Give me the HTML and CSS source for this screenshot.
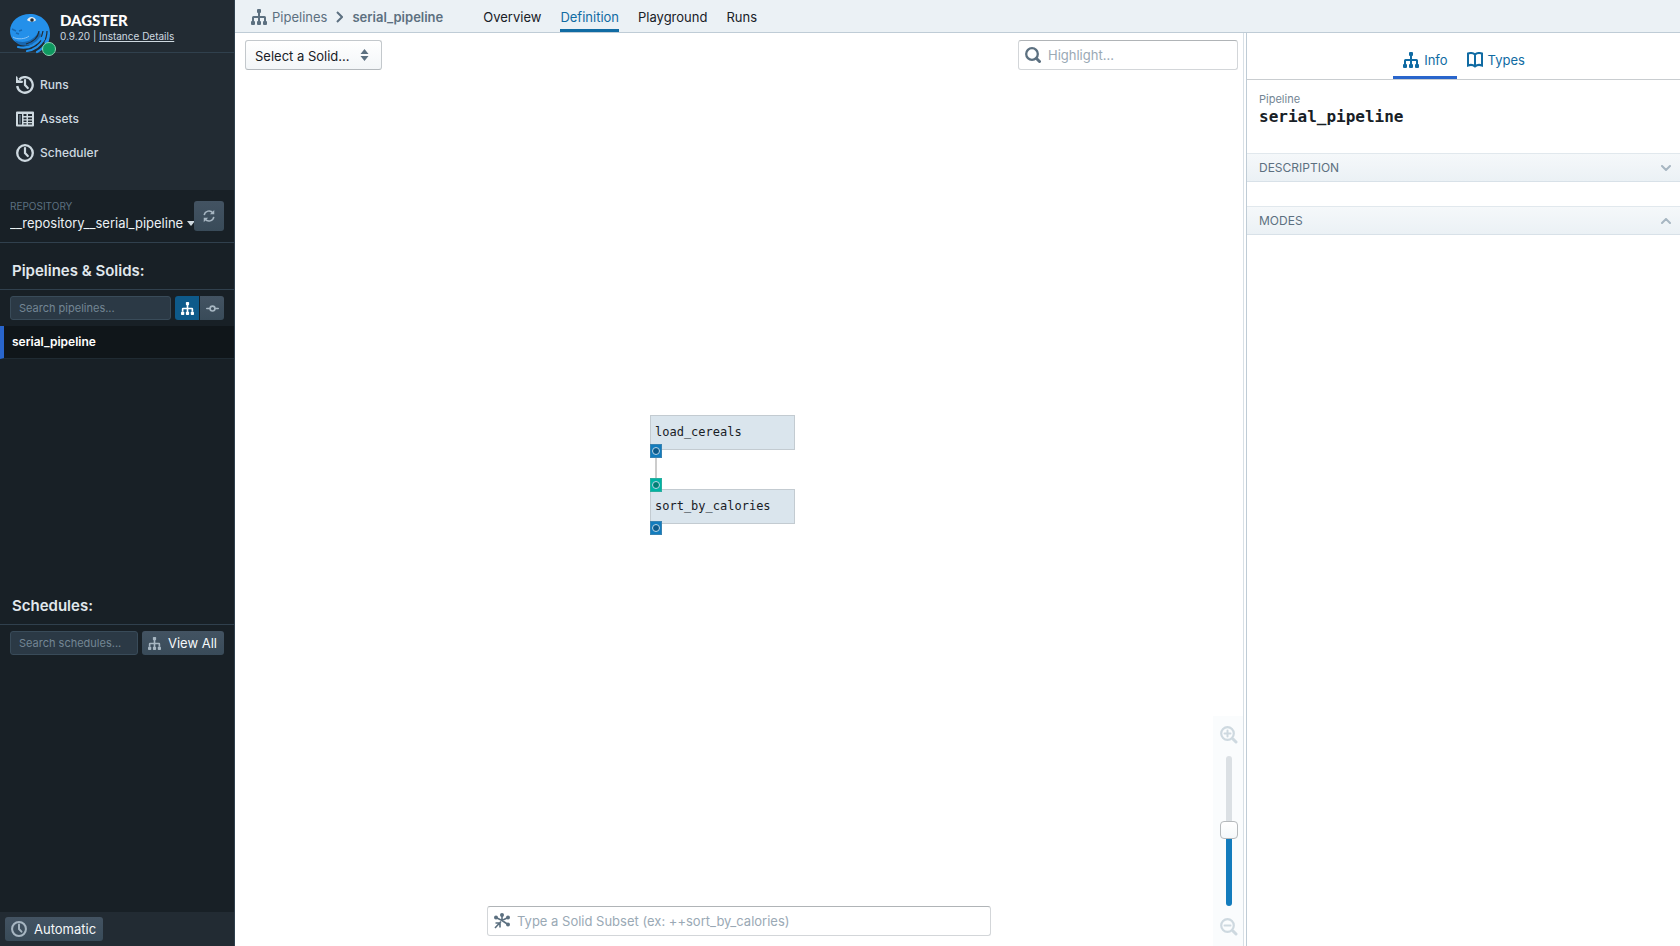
FILE: index.html
```html
<!DOCTYPE html>
<html lang="en">
<head>
<meta charset="utf-8">
<title>Pipelines: serial_pipeline</title>
<link rel="stylesheet" href="styles.css">
</head>
<body>
<svg class="defs" aria-hidden="true">
  <symbol id="i-tree" viewBox="0 0 16 16"><rect x="6" y="0" width="4" height="4" rx="1"/><rect x="7" y="3" width="2" height="10"/><path d="M1 12V8.500Q1 7 2.500 7h11Q15 7 15 8.500V12h-2V9H3v3z"/><rect x="0" y="12" width="4" height="4" rx="1"/><rect x="6" y="12" width="4" height="4" rx="1"/><rect x="12" y="12" width="4" height="4" rx="1"/></symbol>
  <symbol id="i-search" viewBox="0 0 16 16"><circle cx="7" cy="7" r="5.800" fill="none" stroke="currentColor" stroke-width="2.300"/><path d="M11.500 11.500l3 3" stroke="currentColor" stroke-width="3" stroke-linecap="round"/></symbol>
  <symbol id="i-clock" viewBox="0 0 18 18"><circle cx="9" cy="9" r="7.800" fill="none" stroke="currentColor" stroke-width="2.300"/><path d="M9 4v5l2.800 3" fill="none" stroke="currentColor" stroke-width="2.200" stroke-linecap="round"/></symbol>
  <symbol id="i-chevron" viewBox="0 0 10 6"><path d="M1 1l4 4 4-4" fill="none" stroke="currentColor" stroke-width="2" stroke-linecap="round"/></symbol>
</svg>
<div class="app">
  <aside class="sidebar">
    <div class="side-top">
      <header class="brand">
        <div class="logo">
          <svg class="logo-art" viewBox="0 0 42 43"><path d="M20 3C31 3 40 11 40 22c0 5-1 8-3 11-4-2-6-4-8-5-3 5-9 7-15 6C6 33 0 28 0 20 0 10 9 3 20 3z" fill="#2490ea"/><path d="M4 29c9 4 19 2 25-9l2 4c-4 9-14 13-23 9z" fill="#1868b2"/><path d="M3 26c4 3 13 2 16-1" fill="none" stroke="#8cc4f5" stroke-width="1"/><path d="M29 20c-1 7-6 11-13 13M33 20c-1 9-7 13-14 16M37 20c0 10-6 15-12 19" fill="none" stroke="#222b33" stroke-width="1.200"/><g fill="none" stroke="#2490ea" stroke-width="2.200" stroke-linecap="round"><path d="M8 36c9 2 17-1 23-9"/><path d="M17 40c7-1 13-5 17-12"/><path d="M27 41c4-2 8-6 11-12"/></g><path d="M17 9c2-4 7-4 9 0-1 2-7 2-9 0z" fill="#e9eef2"/><circle cx="22" cy="9" r="1.800" fill="#222b33"/><path d="M2 18l4 2M9 20l3-1M6 22l3 1" stroke="#1868b2" stroke-width="1.400"/></svg>
          <span class="status"></span>
        </div>
        <div class="brand-text"><span class="wordmark">DAGSTER</span><span class="version">0.9.20 | <a href="#">Instance Details</a></span></div>
      </header>
      <nav class="side-nav">
        <a href="#"><svg viewBox="0 0 18 18"><path d="M3.200 3.600A7.800 7.800 0 1 1 1.200 10" fill="none" stroke="currentColor" stroke-width="2.300"/><path d="M0 0l1.500 1 .5 3 5 1-.5 2H0z" fill="currentColor"/><path d="M9 4v5l2.800 3" fill="none" stroke="currentColor" stroke-width="2.200" stroke-linecap="round"/></svg>Runs</a>
        <a href="#"><svg viewBox="0 0 18 18"><path fill="currentColor" fill-rule="evenodd" d="M1 1.500h16q1 0 1 1v13q0 1-1 1H1q-1 0-1-1v-13q0-1 1-1zM2 4v10.500h4V4zM7.500 4v2h3V4zM12 4v2h4V4zM7.500 7.500v1.700h3V7.500zM12 7.500v1.700h4V7.500zM7.500 10.500v1.500h3v-1.500zM12 10.500v1.500h4v-1.500zM7.500 13.300v1.200h3v-1.200zM12 13.300v1.200h4v-1.200z"/><path d="M3 5h2v8.500H3z" fill="#53616d"/></svg>Assets</a>
        <a href="#"><svg><use href="#i-clock"/></svg>Scheduler</a>
      </nav>
    </div>
    <section class="repo">
      <div class="repo-pick">
        <label for="repo">REPOSITORY</label>
        <select id="repo"><option>__repository__serial_pipeline</option></select>
        <svg class="caret" viewBox="0 0 8 5"><path d="M0 0h8L4 5z"/></svg>
      </div>
      <button class="dark-btn refresh" aria-label="Reload repository"><svg viewBox="0 0 16 16"><path d="M2.500 7A5.600 5.600 0 0 1 12.500 4.500M13.500 9A5.600 5.600 0 0 1 3.500 11.500" fill="none" stroke="currentColor" stroke-width="1.700"/><path d="M14 1v5H9zM2 15v-5h5z" fill="currentColor"/></svg></button>
    </section>
    <section class="block pipelines">
      <h2>Pipelines &amp; Solids:</h2>
      <div class="tools">
        <input class="dark-input" type="text" aria-label="Search pipelines" placeholder="Search pipelines...">
        <div class="toggle">
          <button class="dark-btn on" aria-label="Pipelines"><svg><use href="#i-tree"/></svg></button>
          <button class="dark-btn" aria-label="Solids"><svg viewBox="0 0 16 16"><circle cx="8" cy="8" r="3" fill="none" stroke="currentColor" stroke-width="2"/><path d="M1 8h4M11 8h4" stroke="currentColor" stroke-width="2" stroke-linecap="round"/></svg></button>
        </div>
      </div>
      <a class="item" href="#">serial_pipeline</a>
    </section>
    <section class="block schedules">
      <h2>Schedules:</h2>
      <div class="tools">
        <input class="dark-input" type="text" aria-label="Search schedules" placeholder="Search schedules...">
        <button class="dark-btn text-btn"><svg><use href="#i-tree"/></svg>View All</button>
      </div>
    </section>
    <footer class="side-foot"><button class="dark-btn text-btn"><svg><use href="#i-clock"/></svg>Automatic</button></footer>
  </aside>
  <div class="content">
    <header class="topbar">
      <nav class="crumbs"><a href="#"><svg class="crumb-icon"><use href="#i-tree"/></svg>Pipelines</a><svg class="crumb-sep" viewBox="0 0 7 12"><path d="M1 1l5 5-5 5" fill="none" stroke="currentColor" stroke-width="2"/></svg><b>serial_pipeline</b></nav>
      <nav class="tabs"><a href="#">Overview</a><a class="active" href="#">Definition</a><a href="#">Playground</a><a href="#">Runs</a></nav>
    </header>
    <div class="split">
      <main class="canvas">
        <div class="canvas-top">
          <div class="solid-pick"><select aria-label="Select a Solid"><option>Select a Solid...</option></select><svg viewBox="0 0 8 12"><path d="M4 0l4 5H0zM0 7h8l-4 5z"/></svg></div>
          <label class="field highlight"><svg><use href="#i-search"/></svg><input type="text" aria-label="Highlight" placeholder="Highlight..."></label>
        </div>
        <div class="graph">
          <div class="wire"></div>
          <div class="node first">load_cereals</div>
          <div class="node second">sort_by_calories</div>
          <span class="port p1"></span><span class="port in p2"></span><span class="port p3"></span>
        </div>
        <div class="zoom">
          <button aria-label="Zoom in"><svg viewBox="0 0 18 18"><circle cx="7.500" cy="7.500" r="6.300" fill="none" stroke="currentColor" stroke-width="2.200"/><path d="M13 13l3 3" stroke="currentColor" stroke-width="3" stroke-linecap="round"/><path d="M4.500 7.500h6M7.500 4.500v6" stroke="currentColor" stroke-width="2" stroke-linecap="round"/></svg></button>
          <input type="range" aria-label="Zoom level" min="0" max="100" value="51">
          <button aria-label="Zoom out"><svg viewBox="0 0 18 18"><circle cx="7.500" cy="7.500" r="6.300" fill="none" stroke="currentColor" stroke-width="2.200"/><path d="M13 13l3 3" stroke="currentColor" stroke-width="3" stroke-linecap="round"/><path d="M4.500 7.500h6" stroke="currentColor" stroke-width="2" stroke-linecap="round"/></svg></button>
        </div>
        <label class="field subset"><svg viewBox="0 0 16 16"><path d="M8 7.500V2M8 7.500L2 4.500M8 7.500L14 4.500M8 7.500L14 11.500M7 8.500L1 15M1.500 10H6v4.500" fill="none" stroke="currentColor" stroke-width="1.600"/><g fill="currentColor"><circle cx="8" cy="2" r="2"/><circle cx="2" cy="4.500" r="2"/><circle cx="14" cy="4.500" r="2"/><circle cx="14" cy="11.500" r="2"/></g></svg><input type="text" aria-label="Solid subset" placeholder="Type a Solid Subset (ex: ++sort_by_calories)"></label>
      </main>
      <div class="divider"></div>
      <aside class="info">
        <nav class="info-tabs">
          <a class="active" href="#"><svg><use href="#i-tree"/></svg>Info</a>
          <a href="#"><svg viewBox="0 0 16 16"><path d="M8 2.500C6 .8 3 .8 1 1.500v12c2-.8 5-.8 7 1 2-1.800 5-1.800 7-1v-12c-2-.7-5-.7-7 1zM8 2.500V15" fill="none" stroke="currentColor" stroke-width="2"/></svg>Types</a>
        </nav>
        <div class="heading"><span>Pipeline</span><h1>serial_pipeline</h1></div>
        <button class="bar">DESCRIPTION<svg><use href="#i-chevron"/></svg></button>
        <button class="bar open">MODES<svg><use href="#i-chevron"/></svg></button>
      </aside>
    </div>
  </div>
</div>
</body>
</html>
```
FILE: styles.css
```css
* { box-sizing: border-box; }
body { margin: 0; font: 13px/18px Inter, "Liberation Sans", sans-serif; color: #182026; background: #fff; }
a { color: inherit; text-decoration: none; }
button, input, select { font: inherit; color: inherit; margin: 0; }
button { cursor: pointer; }
svg { fill: currentColor; flex: none; display: block; width: 16px; height: 16px; }
.defs { position: absolute; width: 0; height: 0; }
h1, h2 { margin: 0; }
.app { display: flex; min-height: 100vh; }

.sidebar { width: 235px; flex: none; display: flex; flex-direction: column; background: #182026; color: #ced9e0; border-right: 1px solid #30404d; }
.side-top { background: #222b33; height: 190px; }
.brand { display: flex; gap: 8px; height: 53px; padding: 11px 0 0 10px; border-bottom: 1px solid #30404d; }
.logo { position: relative; width: 42px; height: 43px; }
.logo-art { width: 42px; height: 43px; }
.status { position: absolute; right: -4px; bottom: -2px; width: 14px; height: 14px; border-radius: 50%; background: #0f9960; border: 1px solid #8ed3b4; }
.brand-text { display: flex; flex-direction: column; }
.wordmark { font: 900 15px/18px Lato, Inter, sans-serif; color: #fff; }
.version { font-size: 10px; line-height: 14px; }
.version a { text-decoration: underline; }
.side-nav { padding: 15px 16px; display: flex; flex-direction: column; }
.side-nav a { display: flex; align-items: center; gap: 6px; height: 34px; font-size: 12px; font-weight: 500; }
.side-nav svg { width: 18px; height: 18px; }

.repo { display: flex; align-items: center; padding: 0 10px; height: 53px; border-bottom: 1px solid #30404d; }
.repo-pick { position: relative; flex: 1; display: flex; flex-direction: column; }
.repo-pick label { font-size: 10px; line-height: 14px; color: #5c7080; }
.repo-pick select { appearance: none; border: 0; background: none; padding: 0; width: 100%; height: 20px; color: #ebf1f5; }
.caret { position: absolute; right: -1px; bottom: 7px; width: 8px; height: 5px; }
.dark-btn { border: 0; border-radius: 3px; color: #a7b6c2; background: linear-gradient(#435362, #394b59); display: flex; align-items: center; justify-content: center; padding: 0; }
.refresh { width: 30px; height: 30px; position: relative; }
.refresh svg { width: 14px; height: 14px; }
.block h2 { font-size: 15px; line-height: 20px; font-weight: 600; padding: 18px 12px 8px; border-bottom: 1px solid #30404d; color: #e1e8ed; }
.tools { display: flex; gap: 4px; padding: 6px 10px; }
.dark-input { flex: 1; min-width: 0; height: 24px; border: 1px solid #394b59; border-radius: 3px; background: #2b3945; padding: 0 8px; font-size: 11px; outline: 0; }
.dark-input::placeholder { color: #738694; opacity: 1; }
.toggle { display: flex; gap: 1px; }
.toggle .dark-btn { width: 24px; height: 24px; border-radius: 0 3px 3px 0; }
.toggle .dark-btn.on { background: #0e5a8a; color: #fff; border-radius: 3px 0 0 3px; }
.toggle svg { width: 13px; height: 13px; }
.item { display: block; border-left: 4px solid #2965cc; border-bottom: 1px solid #202b33; background: #10161a; color: #fff; font-weight: 600; padding: 7px 8px; font-size: 12px; }
.pipelines { flex: 335 1 0; }
.schedules { flex: 334 1 0; }
.text-btn { height: 24px; padding: 0 7px 0 6px; gap: 7px; color: #f5f8fa; }
.text-btn svg { color: #a7b6c2; width: 13px; height: 13px; }
.side-foot { background: #222b33; padding: 5px; height: 34px; }
.side-foot svg { width: 16px; height: 16px; }

.content { flex: 1; min-width: 0; display: flex; flex-direction: column; }
.topbar { height: 33px; background: #ebf1f5; border-bottom: 1px solid #bfccd6; display: flex; gap: 40px; padding: 0 16px; }
.crumbs, .crumbs a { display: flex; align-items: center; color: #5c7080; }
.crumbs { gap: 9px; padding-top: 2px; }
.crumbs a { gap: 5px; }
.crumbs b { font-weight: 600; }
.crumb-sep { width: 7px; height: 12px; }
.tabs { display: flex; gap: 19px; }
.tabs a { padding-top: 8px; border-bottom: 3px solid transparent; }
.tabs .active { color: #106ba3; border-color: #106ba3; }
.split { flex: 1; display: flex; }
.canvas { flex: 1; position: relative; }
.canvas-top { display: flex; justify-content: space-between; padding: 7px 5px 0 10px; }
.solid-pick { position: relative; }
.solid-pick select { appearance: none; width: 137px; height: 30px; border: 1px solid #c3c8cc; border-bottom-color: #b3b8bc; border-radius: 3px; background: linear-gradient(#fff, #f3f6f8); padding: 1px 9px 0; }
.solid-pick svg { position: absolute; right: 13px; top: 9px; width: 9px; height: 12px; color: #5c7080; pointer-events: none; }
.field { position: relative; display: block; color: #5c7080; }
.field svg { position: absolute; left: 7px; top: 7px; }
.field input { width: 100%; height: 30px; border: 1px solid #d3d6d9; border-top-color: #b0b4b7; border-radius: 3px; background: #fff; padding: 0 10px 0 29px; outline: 0; }
.field input::placeholder { color: #9aa9b5; opacity: 1; }
.highlight { width: 220px; }
.subset { position: absolute; bottom: 10px; left: 25%; right: 25%; }
.graph { position: absolute; left: calc(50% - 89px); top: calc(50% - 75px); width: 145px; height: 122px; }
.node { position: absolute; left: 0; width: 145px; height: 35px; padding: 8px 4px; background: #dae5ed; border: 1px solid #c3cbd1; font: 12px/17px "DejaVu Sans Mono", monospace; }
.first { top: 0; }
.second { top: 74px; }
.wire { position: absolute; left: 5px; top: 40px; width: 2px; height: 30px; background: #ccc; }
.port { position: absolute; left: 0; width: 12px; height: 14px; background: #137cbd; border: 1px solid #3a83b1; display: flex; align-items: center; justify-content: center; }
.port::after { content: ""; width: 6px; height: 6px; border: 1px solid #b9d6e9; border-radius: 50%; background: #0e5a8a; }
.port.in { background: #00b3a4; border-color: #2bae9f; }
.port.in::after { background: #008075; }
.p1 { top: 29px; }
.p2 { top: 63px; }
.p3 { top: 106px; }
.zoom { position: absolute; right: 0; bottom: 0; width: 30px; height: 230px; background: #fafcfd; display: flex; flex-direction: column; align-items: center; justify-content: space-between; padding: 10px 0 10px 2px; }
.zoom button { border: 0; background: none; padding: 0; color: #ced9e0; }
.zoom svg { width: 18px; height: 18px; }
.zoom input { appearance: none; writing-mode: vertical-lr; direction: rtl; width: 18px; height: 150px; background: none; }
.zoom input::-webkit-slider-runnable-track { width: 6px; border-radius: 3px; background: linear-gradient(#dbe0e4 50%, #137cbd 50%); }
.zoom input::-webkit-slider-thumb { appearance: none; width: 18px; height: 18px; margin-left: -6px; border: 1px solid #b5b9bc; border-radius: 4px; background: linear-gradient(#fff, #f5f8fa); }
.divider { width: 4px; border: solid #bfccd6; border-width: 0 1px; border-left-color: #d8e0e6; }
.info { width: 433px; display: flex; flex-direction: column; }
.info-tabs { display: flex; justify-content: center; height: 47px; padding-top: 10px; border-bottom: 1px solid #c9cdd0; color: #106ba3; }
.info-tabs a { display: flex; align-items: center; gap: 5px; padding: 0 9px 0 10px; border-bottom: 3px solid transparent; }
.info-tabs .active { border-color: #2965cc; }
.heading { padding: 11px 12px 27px; display: flex; flex-direction: column; height: 73px; }
.heading span { font-size: 11px; line-height: 16px; color: #738694; }
.heading h1 { font: 700 16px/20px "DejaVu Sans Mono", monospace; }
.bar { display: flex; align-items: center; justify-content: space-between; height: 29px; margin-bottom: 24px; padding: 0 9px 0 12px; border: solid #e1e8ed; border-width: 1px 0; border-bottom-color: #d8e1e8; background: linear-gradient(#f5f8fa, #ebf1f5); color: #5c7080; font-size: 12px; }
.bar svg { width: 10px; height: 6px; color: #a7b6c2; }
.bar.open svg { transform: rotate(180deg); }
```
